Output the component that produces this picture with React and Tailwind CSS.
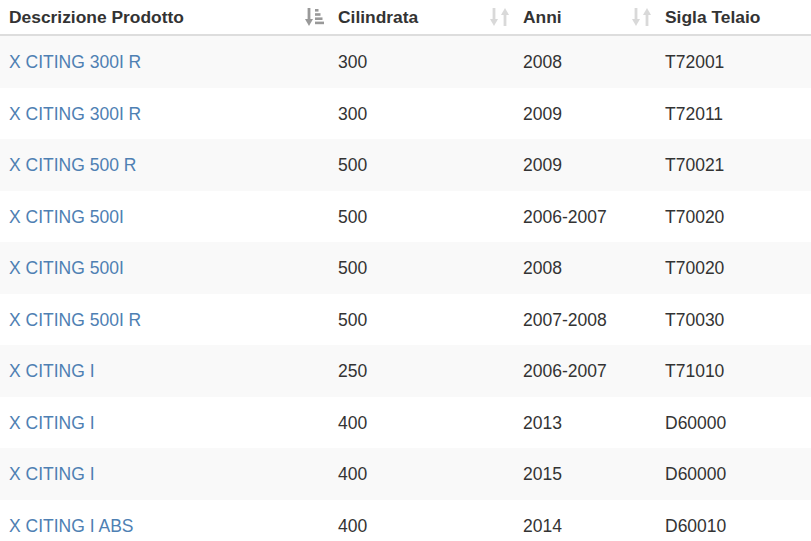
import React from "react";

const rows = [
  ["X CITING 300I R", "300", "2008", "T72001"],
  ["X CITING 300I R", "300", "2009", "T72011"],
  ["X CITING 500 R", "500", "2009", "T70021"],
  ["X CITING 500I", "500", "2006-2007", "T70020"],
  ["X CITING 500I", "500", "2008", "T70020"],
  ["X CITING 500I R", "500", "2007-2008", "T70030"],
  ["X CITING I", "250", "2006-2007", "T71010"],
  ["X CITING I", "400", "2013", "D60000"],
  ["X CITING I", "400", "2015", "D60000"],
  ["X CITING I ABS", "400", "2014", "D60010"],
];

function SortAttr() {
  return (
    <svg width="19" height="18" viewBox="0 0 19 18" className="shrink-0">
      <g fill="#999">
        <rect x="2.6" y="0" width="2.8" height="12" />
        <path d="M0 11 L8 11 L4 18 Z" />
        <rect x="10" y="1" width="3.5" height="2.6" />
        <rect x="10" y="5.2" width="5.5" height="2.6" />
        <rect x="10" y="9.4" width="7.5" height="2.6" />
        <rect x="10" y="13.6" width="9" height="2.6" />
      </g>
    </svg>
  );
}

function SortBoth() {
  return (
    <svg width="19" height="18" viewBox="0 0 19 18" className="shrink-0">
      <g fill="#d9d9d9">
        <rect x="2.6" y="0" width="2.8" height="12" />
        <path d="M0 11 L8 11 L4 18 Z" />
        <rect x="13.6" y="6" width="2.8" height="12" />
        <path d="M11 7 L19 7 L15 0 Z" />
      </g>
    </svg>
  );
}

const cols = "grid grid-cols-[329px_185px_142px_1fr]";

export default function App() {
  return (
    <div
      className="w-[811px] h-[541px] overflow-hidden bg-white text-[#333]"
      style={{ fontFamily: '"Liberation Sans", Arial, sans-serif' }}
    >
      <div className={`${cols} h-[36px] border-b-2 border-[#dddddd] font-bold text-[17.4px]`}>
        <div className="flex items-center justify-between pl-[9px] pr-[5px]">
          <span>Descrizione Prodotto</span>
          <SortAttr />
        </div>
        <div className="flex items-center justify-between pl-[9px] pr-[5px]">
          <span>Cilindrata</span>
          <SortBoth />
        </div>
        <div className="flex items-center justify-between pl-[9px] pr-[5px]">
          <span>Anni</span>
          <SortBoth />
        </div>
        <div className="flex items-center pl-[9px]">
          <span>Sigla Telaio</span>
        </div>
      </div>
      {rows.map((r, i) => (
        <div
          key={i}
          className={`${cols} h-[51.5px] text-[17.5px] ${i % 2 === 0 ? "bg-[#f9f9f9]" : "bg-white"}`}
        >
          <div className="flex items-center pl-[9px] pt-[1px] text-[#4e80b3]">{r[0]}</div>
          <div className="flex items-center pl-[9px] pt-[1px]">{r[1]}</div>
          <div className="flex items-center pl-[9px] pt-[1px]">{r[2]}</div>
          <div className="flex items-center pl-[9px] pt-[1px]">{r[3]}</div>
        </div>
      ))}
    </div>
  );
}
